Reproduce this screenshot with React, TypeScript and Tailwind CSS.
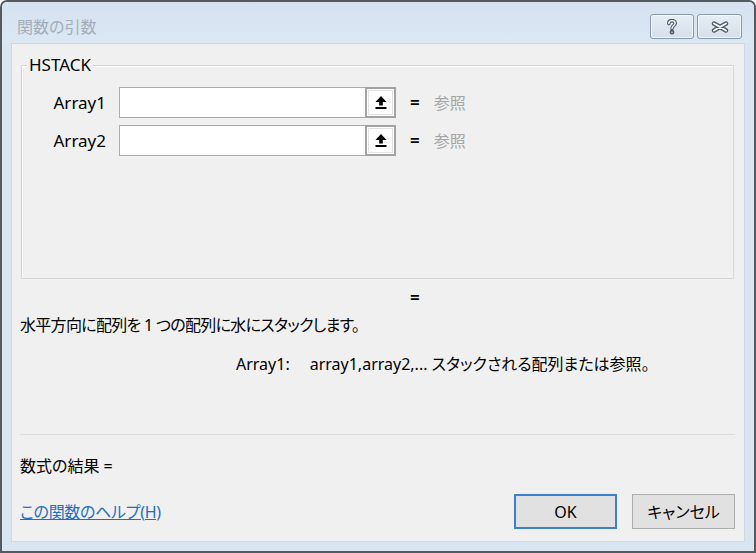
import React from "react";

const font = "[font-family:'Noto_Sans','Noto_Sans_CJK_JP',sans-serif] [font-feature-settings:'palt']";

function RefIcon() {
  return (
    <svg width="12" height="13" viewBox="0 0 12 13">
      <polygon points="6,0 0.5,6 11.5,6" fill="#000" />
      <rect x="4.2" y="5.5" width="3.6" height="4" fill="#000" />
      <rect x="0.5" y="11" width="11" height="2" fill="#000" />
    </svg>
  );
}

function ArgRow({ label }: { label: string }) {
  return (
    <div className="flex items-center h-[31px]">
      <div className="w-[84px] text-right text-[17px] leading-[20px] text-black">{label}</div>
      <div className="ml-[13px] flex h-[31px] w-[277px]">
        <div className="flex-1 h-full bg-white border border-r-0 border-[#abadb3]" />
        <div className="w-[31px] h-full border-2 border-[#a3a3a3] bg-white flex items-center justify-center">
          <div className="w-[25px] h-[25px] border border-[#e3e3e3] bg-white flex items-center justify-center">
            <RefIcon />
          </div>
        </div>
      </div>
      <div className="ml-[14px] text-[17px] leading-[20px] font-semibold text-black">=</div>
      <div className="ml-[14px] text-[16px] leading-[20px] text-[#a5a5a5]">参照</div>
    </div>
  );
}

function HelpIcon() {
  return (
    <svg width="12" height="16" viewBox="0 0 12 16">
      <g fill="none" strokeLinecap="round" strokeLinejoin="round">
        <path d="M2.8 4.6 C2.8 2.4 4.3 1.6 6 1.6 C7.9 1.6 9.2 2.8 9.2 4.3 C9.2 6.3 6 6.8 6 9.4" stroke="#4a586a" strokeWidth="3.6" />
        <circle cx="6" cy="13.2" r="1.2" fill="#4a586a" stroke="#4a586a" strokeWidth="2.4" />
        <path d="M2.8 4.6 C2.8 2.4 4.3 1.6 6 1.6 C7.9 1.6 9.2 2.8 9.2 4.3 C9.2 6.3 6 6.8 6 9.4" stroke="#ffffff" strokeWidth="1.4" />
        <circle cx="6" cy="13.2" r="0.7" fill="#ffffff" />
      </g>
    </svg>
  );
}

function CloseIcon() {
  return (
    <svg width="18" height="12" viewBox="0 0 18 12">
      <g fill="none" strokeLinecap="round">
        <path d="M3 2.5 L15 9.5 M15 2.5 L3 9.5" stroke="#4a586a" strokeWidth="4.4" />
        <path d="M3 2.5 L15 9.5 M15 2.5 L3 9.5" stroke="#ffffff" strokeWidth="2" />
      </g>
    </svg>
  );
}

export default function App() {
  return (
    <div className={`w-[756px] h-[553px] ${font}`}>
      <div className="w-full h-full flex flex-col border-2 border-[#555a60] rounded-t-[7px] bg-[#dae5f2]">
        {/* title bar */}
        <div className="h-[41px] flex items-start pl-[15px] pr-[12px] bg-gradient-to-b from-[#d6e2f0] to-[#dce7f4] rounded-t-[5px]">
          <div className="mt-[15px] text-[16px] leading-[20px] text-[#a2adba]">関数の引数</div>
          <div className="ml-auto mt-[12px] flex gap-[3px]">
            <div className="w-[44px] h-[25px] rounded-[3px] border border-[#8a98ab] bg-gradient-to-b from-[#e6edf5] to-[#d5e0ec] shadow-[inset_0_0_0_1px_rgba(255,255,255,0.6)] flex items-center justify-center">
              <HelpIcon />
            </div>
            <div className="w-[45px] h-[25px] rounded-[3px] border border-[#8a98ab] bg-gradient-to-b from-[#e6edf5] to-[#d5e0ec] shadow-[inset_0_0_0_1px_rgba(255,255,255,0.6)] flex items-center justify-center">
              <CloseIcon />
            </div>
          </div>
        </div>

        {/* content */}
        <div className="flex-1 ml-[9px] mr-[9px] mb-[9px] bg-[#f0f0f0] border border-[#cdd8e5] flex flex-col pl-[8px] pr-[9px] text-black">
          {/* group box */}
          <div className="relative mt-[21px] ml-[1px] mr-[1px] h-[214px] border border-[#d5d5d5] shadow-[inset_1px_1px_0_#ffffff]">
            <div className="absolute -top-[11px] left-[5px] px-[2px] bg-[#f0f0f0] text-[17px] leading-[20px]">HSTACK</div>
            <div className="pt-[21px] flex flex-col gap-[7px]">
              <ArgRow label="Array1" />
              <ArgRow label="Array2" />
            </div>
          </div>

          <div className="mt-[9px] ml-[390px] text-[17px] leading-[20px] font-semibold">=</div>
          <div className="mt-[7px] text-[16px] leading-[20px] tracking-[-0.7px]">水平方向に配列を 1 つの配列に水にスタックします。</div>
          <div className="mt-[19px] ml-[216px] flex text-[16px] leading-[20px]">
            <span>Array1:</span>
            <span className="ml-[20px]">array1,array2,... スタックされる配列または参照。</span>
          </div>

          <div className="mt-[60px] h-[1px] bg-[#dcdcdc]" />

          <div className="mt-[21px] text-[16px] leading-[20px]">数式の結果 =</div>

          <div className="mt-[18px] flex items-center">
            <span className="text-[16px] leading-[20px] text-[#1c6fc6] underline tracking-[-0.3px]">この関数のヘルプ(H)</span>
            <div className="ml-auto flex gap-[15px]">
              <div className="w-[103px] h-[35px] border-2 border-[#3c80d2] bg-[#e1e1e1] flex items-center justify-center text-[16px]">OK</div>
              <div className="w-[103px] h-[35px] border border-[#adadad] bg-[#e1e1e1] flex items-center justify-center text-[16px]">キャンセル</div>
            </div>
          </div>
        </div>
      </div>
    </div>
  );
}
